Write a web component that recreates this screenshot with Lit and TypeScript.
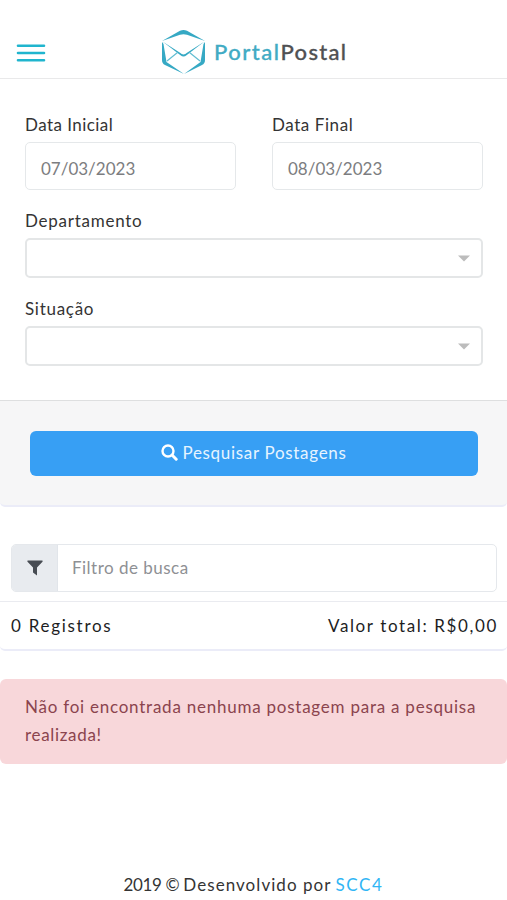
import { LitElement, html, css } from "lit";
import { customElement } from "lit/decorators.js";

@customElement("app-root")
export class AppRoot extends LitElement {
  static styles = css`
    :host {
      display: block;
      height: 900px;
      overflow: hidden;
      background: #fff;
      color: #343434;
      font: 17px/24px Lato, "Open Sans", sans-serif;
    }
    * { box-sizing: border-box; }
    svg { display: block; flex: none; }
    span { white-space: nowrap; }
    .header {
      display: flex;
      align-items: flex-start;
      height: 79px;
      padding: 29px 0 0 16px;
      border-bottom: 1px solid #e9e9ea;
    }
    .menu { margin-top: 14px; }
    .brand { display: flex; margin-left: 116px; }
    .name {
      margin: 9px 0 0 8px;
      font: 500 22px/28px Lato, sans-serif;
      letter-spacing: 1.3px;
      color: #505153;
      -webkit-text-stroke: 0.3px currentColor;
    }
    .teal { color: #41abc4; letter-spacing: 1.5px; }
    .form {
      display: flex;
      flex-direction: column;
      height: 321px;
      padding: 34px 24px 0 25px;
    }
    .dates { display: grid; grid-template-columns: 211px 211px; gap: 36px; height: 96px; }
    .field { display: flex; flex-direction: column; height: 88px; }
    .label { height: 29px; line-height: 24px; }
    .l1 { letter-spacing: 0.44px; }
    .l2 { letter-spacing: 0.57px; }
    .l3 { letter-spacing: 0.75px; }
    .l4 { letter-spacing: 0.72px; }
    .date {
      height: 48px;
      border: 1px solid #e5e8ea;
      border-radius: 5px;
      padding: 14px 15px 0;
      color: #7c7d80;
    }
    .select {
      display: flex;
      justify-content: flex-end;
      height: 40px;
      padding: 15px 11px 0;
      border: 2px solid #e4e6e7;
      border-radius: 5px;
    }
    .actions {
      height: 107px;
      padding: 30px 29px 0 30px;
      background: #f6f6f7;
      border-top: 1px solid #dedfe0;
      border-bottom: 2px solid #ebecf8;
      border-radius: 0 0 5px 5px;
    }
    .button {
      display: flex;
      align-items: center;
      justify-content: center;
      gap: 4px;
      height: 45px;
      padding-bottom: 2px;
      border-radius: 6px;
      background: #379ff4;
      color: #e6f4ff;
    }
    .search { letter-spacing: 0.69px; }
    .filter {
      display: flex;
      height: 48px;
      margin: 37px 10px 9px 11px;
      border: 1px solid #e5e8ec;
      border-radius: 5px;
      overflow: hidden;
    }
    .addon {
      display: flex;
      align-items: center;
      justify-content: center;
      width: 46px;
      background: #e8ebef;
      border-right: 1px solid #e1e5ea;
    }
    .hint { padding: 11px 0 0 14px; color: #8e9094; letter-spacing: 0.48px; }
    .summary {
      display: flex;
      justify-content: space-between;
      height: 50px;
      padding: 12px 9px 0 11px;
      border-top: 1px solid #eaebf0;
      border-bottom: 2px solid #ebecf8;
      border-radius: 0 0 5px 5px;
      color: #1d1e1f;
    }
    .count { letter-spacing: 1.72px; }
    .total { letter-spacing: 1.62px; }
    .alert {
      display: flex;
      flex-direction: column;
      height: 85px;
      margin-top: 28px;
      padding: 14px 25px;
      border-radius: 6px;
      background: #f8d7da;
      color: #8b444e;
      line-height: 28px;
    }
    .a1 { letter-spacing: 0.76px; }
    .a2 { letter-spacing: 0.68px; }
    .footer {
      display: flex;
      justify-content: center;
      gap: 4px;
      margin-top: 109px;
      font: 17px/24px Lato, sans-serif;
    }
    .year { letter-spacing: -0.35px; }
    .copy { letter-spacing: 1.05px; }
    .link { color: #30b5f5; letter-spacing: 1.6px; }
  `;

  render() {
    const arrow = html`<svg width="12" height="7" viewBox="0 0 12 7"><path d="M0 .5h12L6 6.5z" fill="#bcbcbc"/></svg>`;
    return html`
      <header class="header">
        <svg class="menu" width="30" height="20" viewBox="0 0 30 20" stroke="#20b5ce" stroke-width="2.6" stroke-linecap="round">
          <path d="M2 2.7h26M2 10h26M2 17.2h26"/>
        </svg>
        <div class="brand">
          <svg width="44" height="46" viewBox="0 0 44 46" fill="#36a9c4">
            <path d="M0 12L18 1.800Q21.500 0 25 1.800L43 12 25 5.800Q21.500 4.500 18 5.800Z"/>
            <path d="M0 13L1.500 15 4.500 33 22 45 3 36Q0 34.500 0 31Z"/>
            <path d="M43 13L41.500 15 38.500 33 22 45 40 36Q43 34.500 43 31Z"/>
            <path d="M.5 12.500L18 23.800Q21.500 27 25 23.800L42.500 12.500 24.500 26.300Q21.500 28.700 18.500 26.300Z"/>
            <path d="M5 32L15.500 23.500M38 32L27.500 23.500" fill="none" stroke="#63bed2" stroke-width="1.200"/>
          </svg>
          <span class="name"><span class="teal">Portal</span>Postal</span>
        </div>
      </header>
      <section class="form">
        <div class="dates">
          <div class="field"><span class="label"><span class="l1">Data Inicial</span></span><div class="date"><span>07/03/2023</span></div></div>
          <div class="field"><span class="label"><span class="l2">Data Final</span></span><div class="date"><span>08/03/2023</span></div></div>
        </div>
        <div class="field"><span class="label"><span class="l3">Departamento</span></span><div class="select">${arrow}</div></div>
        <div class="field"><span class="label"><span class="l4">Situação</span></span><div class="select">${arrow}</div></div>
      </section>
      <section class="actions">
        <div class="button">
          <svg width="17" height="17" viewBox="0 0 17 17" fill="none" stroke="#fff" stroke-width="2.400" stroke-linecap="round"><circle cx="7" cy="7" r="5.500"/><path d="M11.300 11.300l3.900 3.900" stroke-width="3"/></svg>
          <span class="search">Pesquisar Postagens</span>
        </div>
      </section>
      <div class="filter">
        <div class="addon"><svg width="16" height="16" viewBox="0 0 16 16"><path d="M.7.500h14.600q.7.600.2 1.200L10 7.500v8L6 12.500v-5L.500 1.700Q0 1.100.7.500z" fill="#474c53"/></svg></div>
        <span class="hint">Filtro de busca</span>
      </div>
      <section class="summary"><span class="count">0 Registros</span><span class="total">Valor total: R$0,00</span></section>
      <div class="alert"><span class="a1">Não foi encontrada nenhuma postagem para a pesquisa</span><span class="a2">realizada!</span></div>
      <footer class="footer"><span class="copy"><span class="year">2019 © </span>Desenvolvido por</span><span class="link">SCC4</span></footer>
    `;
  }
}
